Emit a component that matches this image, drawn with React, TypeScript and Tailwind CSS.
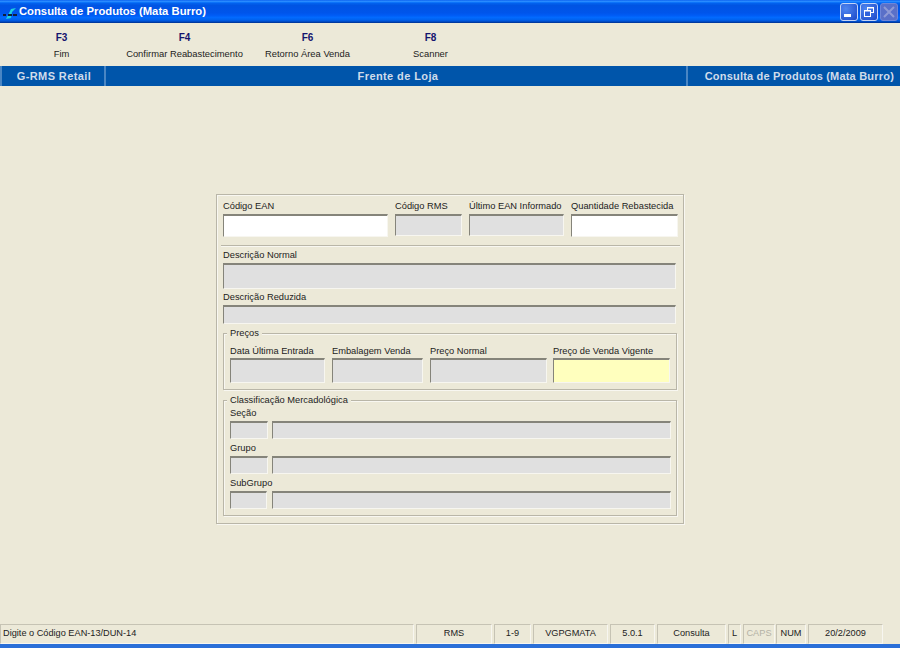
import React from "react";

const font = "font-['Liberation_Sans',Arial,sans-serif]";

function Field({ className }: { className: string }) {
  return (
    <div
      className={`shrink-0 border border-t-2 border-[#f7f6f0] border-t-[#85847a] border-l-[#85847a] ${className}`}
    />
  );
}

function Label({ children, className = "h-[15px]" }: { children: string; className?: string }) {
  return (
    <div className={`flex items-center pt-[1px] text-[9.3px] leading-none whitespace-nowrap text-[#1c1c1c] ${className}`}>
      {children}
    </div>
  );
}

function Column({
  label,
  field,
  width,
  labelHeight = "h-[15px]",
}: {
  label: string;
  field: string;
  width: string;
  labelHeight?: string;
}) {
  return (
    <div className={`shrink-0 ${width}`}>
      <Label className={labelHeight}>{label}</Label>
      <Field className={field} />
    </div>
  );
}

function Group({ title, className, children }: { title: string; className: string; children: React.ReactNode }) {
  return (
    <div
      className={`relative w-[454px] border border-[#b9b6a8] px-[6px] shadow-[inset_1px_1px_0_#f8f7f1,1px_1px_0_#f8f7f1] ${className}`}
    >
      <span className="absolute -top-[7px] left-[3px] bg-[#ece9d8] px-[3px] text-[9.3px] leading-[13px] text-[#1c1c1c]">
        {title}
      </span>
      {children}
    </div>
  );
}

function ToolButton({ k, label }: { k: string; label: string }) {
  return (
    <div className="flex w-[123px] flex-col items-center">
      <span className="h-[16px] text-[10px] leading-[16px] font-bold text-[#14146e]">{k}</span>
      <span className="text-[9.4px] leading-[16px] whitespace-nowrap text-[#222]">{label}</span>
    </div>
  );
}

function StatusCell({ children, className }: { children?: string; className: string }) {
  return (
    <div
      className={`flex h-[20px] shrink-0 items-center justify-center border border-[#f7f6f0] border-t-[#c6c3b4] border-l-[#c6c3b4] text-[9.2px] whitespace-nowrap text-[#222] ${className}`}
    >
      {children}
    </div>
  );
}

function AppIcon() {
  return (
    <svg width="16" height="16" viewBox="0 0 16 16" className="shrink-0">
      <path d="M4 15 L9 5 L14 4 L10 8 L9 14 Z" fill="#1fd0e0" />
      <rect x="1" y="10" width="3" height="2" fill="#10203a" />
      <rect x="6" y="10" width="4" height="2" fill="#10203a" />
      <rect x="11" y="10" width="4" height="2" fill="#10203a" />
    </svg>
  );
}

function WinButton({ children, disabled }: { children: React.ReactNode; disabled?: boolean }) {
  return (
    <div
      className={
        disabled
          ? "flex h-[18px] w-[18px] items-center justify-center rounded-[3px] border border-[#6f86d8] bg-[#5a70c8]"
          : "flex h-[18px] w-[18px] items-center justify-center rounded-[3px] border border-[#c4d4f6] bg-[radial-gradient(circle_at_30%_30%,#4f86f0,#1c48c8)]"
      }
    >
      {children}
    </div>
  );
}

export default function App() {
  return (
    <div className={`flex h-[648px] w-[900px] flex-col overflow-hidden bg-[#ece9d8] ${font}`}>
      {/* title bar */}
      <div className="flex h-[23px] shrink-0 items-center bg-[linear-gradient(180deg,#0058ee_0%,#3593ff_5%,#127dff_9%,#0262ee_14%,#0054e3_24%,#0055eb_56%,#005bf5_66%,#026afe_76%,#0062ef_86%,#0052d6_92%,#0040ab_96%,#003092_100%)] pr-[2px] pl-[2px]">
        <AppIcon />
        <span className="ml-[1px] text-[11.25px] font-bold text-white">Consulta de Produtos (Mata Burro)</span>
        <div className="ml-auto flex gap-[2px]">
          <WinButton>
            <div className="mt-[8px] mr-[3px] h-[3px] w-[7px] bg-white" />
          </WinButton>
          <WinButton>
            <svg width="12" height="12" viewBox="0 0 12 12" fill="none" stroke="white" strokeWidth="1">
              <rect x="4.5" y="1.5" width="6" height="5" />
              <rect x="1.5" y="4.5" width="6" height="6" fill="#2f62dc" />
              <path d="M4.5 2 H10.5 M1.5 5 H7.5" />
            </svg>
          </WinButton>
          <WinButton disabled>
            <svg width="12" height="12" viewBox="0 0 12 12" stroke="#8e9ad6" strokeWidth="2">
              <path d="M1 1 L11 11 M11 1 L1 11" />
            </svg>
          </WinButton>
        </div>
      </div>

      {/* function keys */}
      <div className="flex h-[43px] shrink-0 items-start pt-[7px]">
        <ToolButton k="F3" label="Fim" />
        <ToolButton k="F4" label="Confirmar Reabastecimento" />
        <ToolButton k="F6" label="Retorno Área Venda" />
        <ToolButton k="F8" label="Scanner" />
      </div>

      {/* header band */}
      <div className="flex h-[20px] shrink-0 items-center bg-[#0055aa] text-[11px] font-bold tracking-[0.4px] text-[#d0dcea]">
        <div className="flex h-full w-[106px] items-center justify-center border-x-2 border-[#4a86c4] pl-[2px]">
          G-RMS Retail
        </div>
        <div className="flex h-full w-[580px] items-center justify-center pl-[4px]">Frente de Loja</div>
        <div className="flex h-full flex-1 items-center justify-end border-l-2 border-[#4a86c4] pr-[6px] tracking-[0.2px]">
          Consulta de Produtos (Mata Burro)
        </div>
      </div>

      {/* main area */}
      <div className="flex-1 pt-[108px] pl-[216px]">
        <div className="h-[330px] w-[468px] border border-[#b9b6a8] pt-[4px] pl-[6px] shadow-[inset_1px_1px_0_#f8f7f1,1px_1px_0_#f8f7f1]">
          <div className="flex">
            <Column label="Código EAN" width="w-[165px]" field="h-[23px] w-[165px] bg-white" />
            <Column label="Código RMS" width="ml-[7px] w-[67px]" field="h-[22px] w-[67px] bg-[#e0e0e0]" />
            <Column label="Último EAN Informado" width="ml-[7px] w-[95px]" field="h-[22px] w-[95px] bg-[#e0e0e0]" />
            <Column label="Quantidade Rebastecida" width="ml-[7px] w-[107px]" field="h-[23px] w-[107px] bg-white" />
          </div>

          <div className="mt-[8px] -ml-[2px] h-[2px] w-[459px] border-t border-b border-t-[#b9b6a8] border-b-[#f8f7f1]" />

          <Column label="Descrição Normal" width="mt-[1px] w-[453px]" field="h-[26px] w-[453px] bg-[#e0e0e0]" />
          <Column label="Descrição Reduzida" width="mt-[1px] w-[453px]" field="h-[19px] w-[453px] bg-[#e0e0e0]" />

          <Group title="Preços" className="mt-[9px] h-[57px] pt-[10px]">
            <div className="flex">
              <Column label="Data Última Entrada" labelHeight="h-[14px]" width="w-[95px]" field="h-[25px] w-[95px] bg-[#e0e0e0]" />
              <Column label="Embalagem Venda" labelHeight="h-[14px]" width="ml-[7px] w-[91px]" field="h-[25px] w-[91px] bg-[#e0e0e0]" />
              <Column label="Preço Normal" labelHeight="h-[14px]" width="ml-[7px] w-[117px]" field="h-[25px] w-[117px] bg-[#e0e0e0]" />
              <Column label="Preço de Venda Vigente" labelHeight="h-[14px]" width="ml-[6px] w-[117px]" field="h-[25px] w-[117px] bg-[#ffffbe]" />
            </div>
          </Group>

          <Group title="Classificação Mercadológica" className="mt-[10px] h-[116px] pt-[5px]">
            <Label>Seção</Label>
            <div className="flex gap-[4px]">
              <Field className="h-[18px] w-[38px] bg-[#e0e0e0]" />
              <Field className="h-[18px] w-[399px] bg-[#e0e0e0]" />
            </div>
            <Label className="mt-[2px] h-[15px]">Grupo</Label>
            <div className="flex gap-[4px]">
              <Field className="h-[18px] w-[38px] bg-[#e0e0e0]" />
              <Field className="h-[18px] w-[399px] bg-[#e0e0e0]" />
            </div>
            <Label className="mt-[2px] h-[15px]">SubGrupo</Label>
            <div className="flex gap-[5px]">
              <Field className="h-[18px] w-[37px] bg-[#e0e0e0]" />
              <Field className="h-[18px] w-[399px] bg-[#e0e0e0]" />
            </div>
          </Group>
        </div>
      </div>

      {/* status bar */}
      <div className="flex h-[20px] shrink-0 gap-[2px]">
        <StatusCell className="w-[414px] justify-start! pl-[2px]">Digite o Código EAN-13/DUN-14</StatusCell>
        <StatusCell className="w-[76px]">RMS</StatusCell>
        <StatusCell className="w-[37px]">1-9</StatusCell>
        <StatusCell className="w-[75px]">VGPGMATA</StatusCell>
        <StatusCell className="w-[45px]">5.0.1</StatusCell>
        <StatusCell className="w-[69px]">Consulta</StatusCell>
        <StatusCell className="w-[13px]">L</StatusCell>
        <StatusCell className="w-[32px] text-[#b4b2a6]!">CAPS</StatusCell>
        <StatusCell className="-ml-[1px] w-[30px]">NUM</StatusCell>
        <StatusCell className="w-[75px]">20/2/2009</StatusCell>
      </div>
      <div className="h-[4px] shrink-0 bg-[#2a6fd8]" />
    </div>
  );
}
